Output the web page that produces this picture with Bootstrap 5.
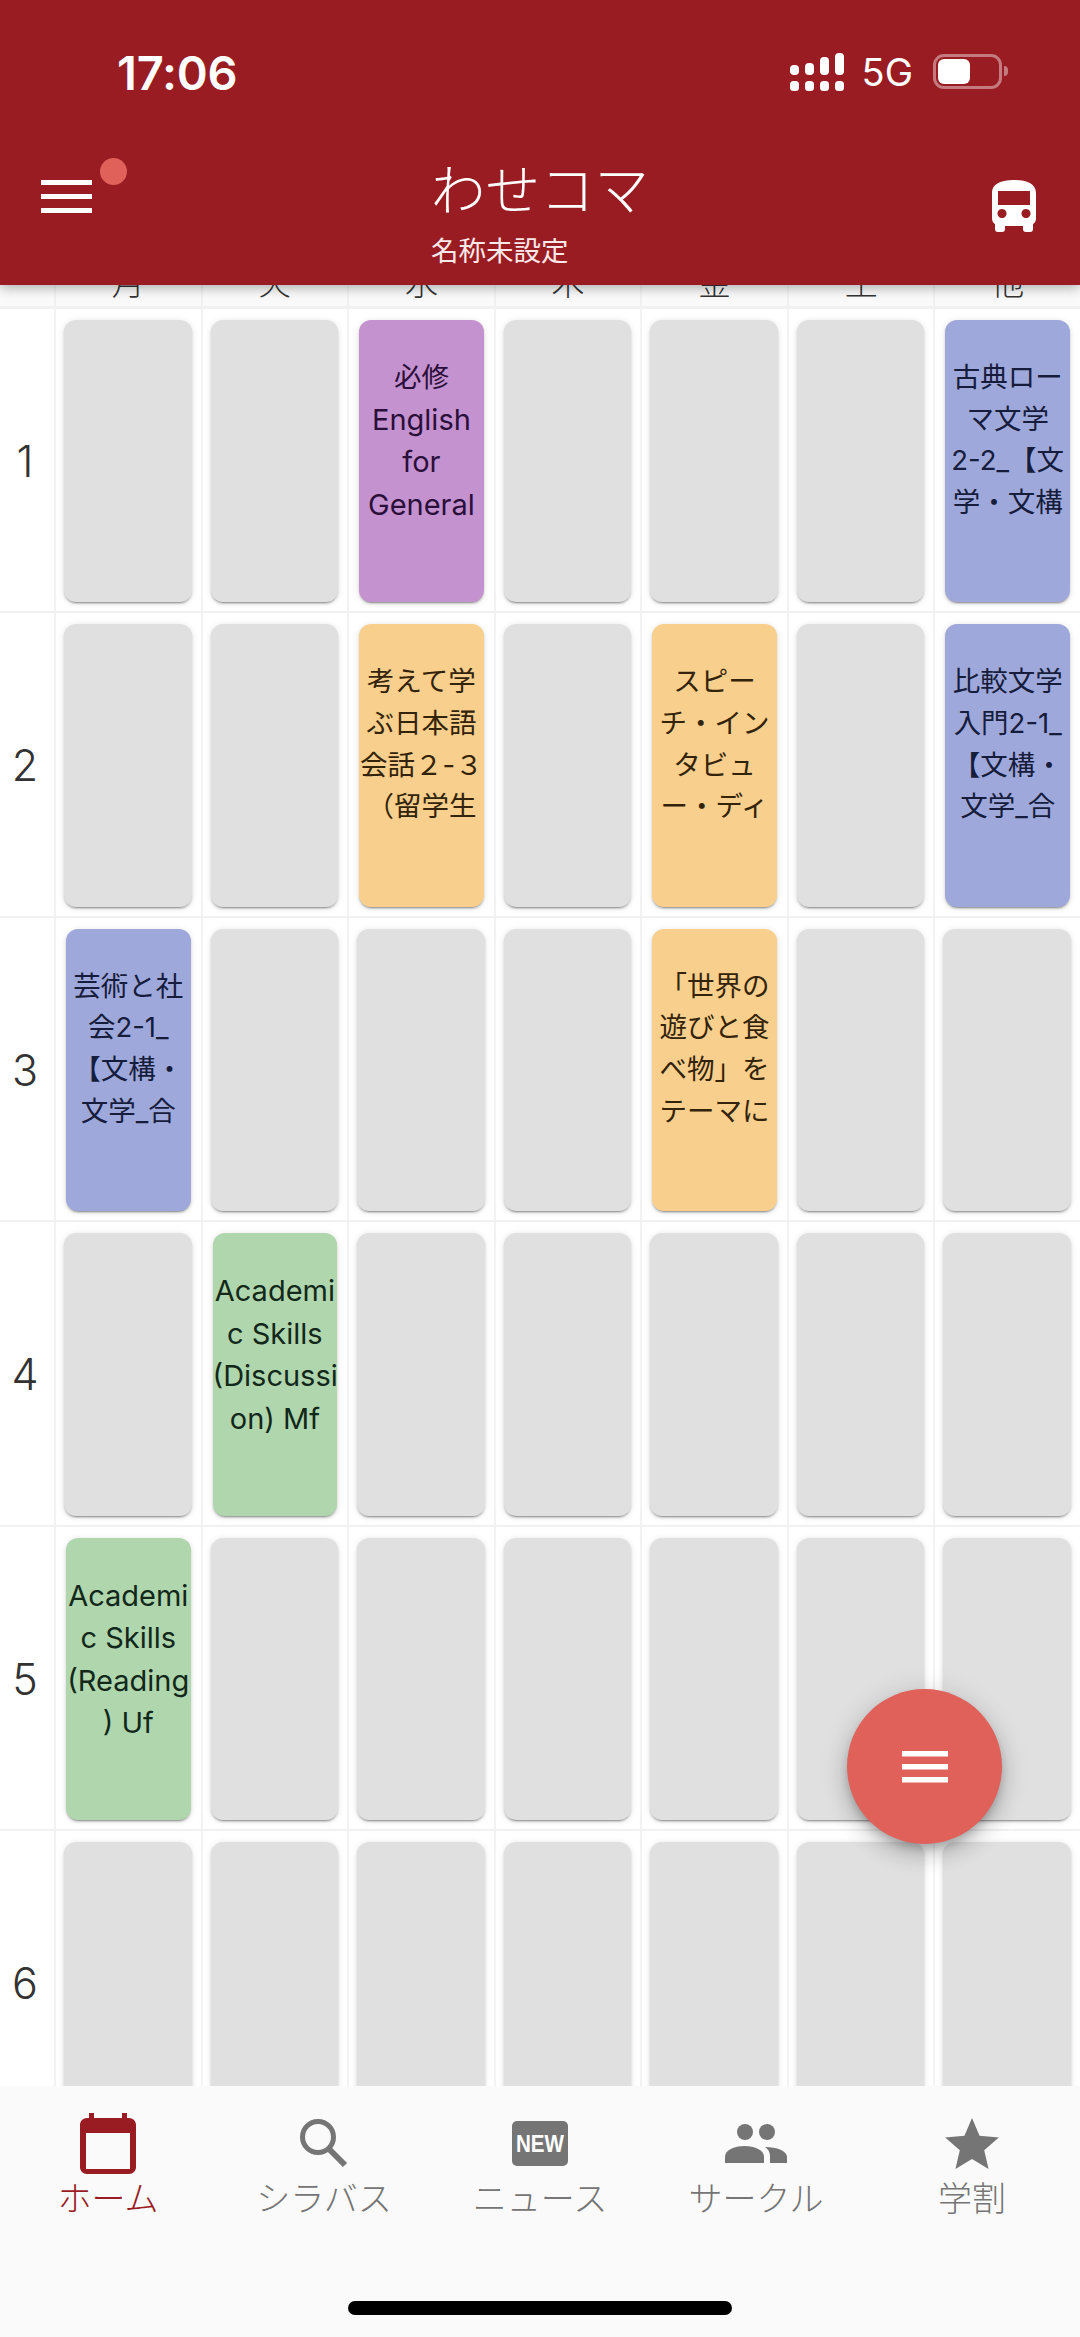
<!doctype html>
<html lang="ja">
<head>
<meta charset="utf-8">
<title>わせコマ</title>
<link href="https://cdn.jsdelivr.net/npm/bootstrap@5.3.0/dist/css/bootstrap.min.css" rel="stylesheet">
<style>
html,body{height:100%;background:#fff}
body{font-family:"Inter","Noto Sans CJK JP",sans-serif;color:#212121}
.wk-app{height:2337px}
.wk-head{background:#9a1c23;color:#fff;height:285px;box-shadow:0 2px 12px rgba(0,0,0,.35);z-index:3;flex:none}
.wk-status{height:144px;padding:0 78px 0 117px}
.wk-time{font-size:47px;font-weight:600;line-height:1;letter-spacing:-.2px}
.wk-five{font-size:38px;line-height:1;margin:0 20px 0 18px}
.wk-bat{width:69px;height:35px;border:3px solid rgba(255,255,255,.42);border-radius:11px;padding:2px;margin-top:-2px}
.wk-bat i{display:block;width:32px;height:100%;background:#fff;border-radius:6px}
.wk-tip{width:4px;height:10px;background:rgba(255,255,255,.42);border-radius:0 4px 4px 0;margin:-2px -6px 0 2px}
.wk-tool{height:141px;padding:0 44px 0 41px}
.wk-burger{width:51px;margin-top:-36px}
.wk-dot{width:27px;height:27px;border-radius:50%;background:#e0605a;top:14px;left:100px}
.wk-titles{left:431px;top:19px}
.wk-name{font-size:54.5px;line-height:54px;font-weight:300;white-space:nowrap}
.wk-sub{font-size:27.5px;line-height:32px;margin-top:18px;font-weight:400;color:#fbe9ea;white-space:nowrap}
.wk-bus{width:44px;height:52px;margin-top:-17px}
.wk-sheet{flex:1 1 0;min-height:0}
.wk-line{display:grid;grid-template-columns:54px repeat(7,minmax(0,1fr))}
.wk-days{height:24px;background:#fafafa;border-bottom:3px solid #f1f1f1}
.wk-days>div{border-left:2px solid #f1f1f1;height:100%;overflow:hidden;text-align:center;font-size:33px;line-height:33px;color:#333;font-weight:300}
.wk-days>div:first-child{border-left:0}
.wk-days>div span{display:block;margin-top:-18px}
.wk-row{height:304.4px;border-bottom:2px solid #f1f1f1}
.wk-side{font-size:43px;font-weight:300;color:#333;padding:2px 4px 0 0}
.wk-cell{min-width:0;border-left:2px solid #f3f3f3;padding:11px 9px 9px 8px;display:flex}
.wk-cell.wk-on{padding:11px 10px 9px 10px}
.wk-tile{flex:1;min-width:0;border-radius:12px;background:#e0e0e0;box-shadow:0 3px 1px -2px rgba(0,0,0,.22),0 2px 2px rgba(0,0,0,.16),0 1px 6px rgba(0,0,0,.12);padding-top:37px;text-align:center;font-size:27.5px;line-height:41.6px;white-space:nowrap;overflow:hidden}
.wk-lat{font-size:29px}
.wk-purple{background:#c592d0;color:#2a0f3a}
.wk-orange{background:#f8cf8c;color:#33230a}
.wk-blue{background:#9fa8da;color:#161c3c}
.wk-green{background:#b0d6ad;color:#12281a}
.wk-fab{width:155px;height:155px;border-radius:50%;background:#e0605a;right:78px;bottom:493px;box-shadow:0 6px 10px -2px rgba(0,0,0,.22),0 12px 22px rgba(0,0,0,.15),0 3px 30px rgba(0,0,0,.12);z-index:2}
.wk-fab:hover{background:#e0605a}
.wk-nav{background:#fafafa;height:251px;flex:none;padding-top:26px;z-index:1}
.wk-tab{flex:0 0 216px;color:#757575;font-size:34px;line-height:50px;text-align:center;font-weight:300}
.wk-tab.wk-cur{color:#9a1c23}
.wk-ico{height:62px}
.wk-bar{width:384px;height:14px;background:#000;border-radius:7px;margin:77px auto 0}
</style>
</head>
<body>
<div class="wk-app d-flex flex-column overflow-hidden position-relative">
  <header class="wk-head position-relative">
    <div class="wk-status d-flex align-items-center justify-content-between">
      <div class="wk-time">17:06</div>
      <div class="d-flex align-items-center">
        <svg width="54" height="38" viewBox="0 0 54 38" fill="#fff" aria-hidden="true"><rect x="0" y="12" width="9" height="10" rx="4"/><rect x="15" y="10" width="9" height="12" rx="4"/><rect x="30" y="4" width="9" height="18" rx="4"/><rect x="45" y="0" width="9" height="22" rx="4"/><rect x="0" y="28" width="9" height="10" rx="3.5"/><rect x="15" y="28" width="9" height="10" rx="3.5"/><rect x="30" y="28" width="9" height="10" rx="3.5"/><rect x="45" y="28" width="9" height="10" rx="3.5"/></svg>
        <span class="wk-five">5G</span>
        <div class="wk-bat"><i></i></div><div class="wk-tip"></div>
      </div>
    </div>
    <div class="wk-tool d-flex align-items-center justify-content-between position-relative">
      <svg class="wk-burger" viewBox="0 0 51 33" fill="#fff" aria-hidden="true"><rect width="51" height="5"/><rect y="14" width="51" height="5"/><rect y="28" width="51" height="5"/></svg>
      <span class="wk-dot position-absolute"></span>
      <div class="wk-titles position-absolute">
        <div class="wk-name">わせコマ</div>
        <div class="wk-sub">名称未設定</div>
      </div>
      <svg class="wk-bus" viewBox="0 0 44 52" aria-hidden="true"><path fill="#fff" fill-rule="evenodd" d="M0 38V13C0 3 11 0 22 0s22 3 22 13v25c0 3-1 5-3 6v5c0 2-1 3-3 3h-4c-2 0-3-1-3-3v-3H13v3c0 2-1 3-3 3H6c-2 0-3-1-3-3v-5c-2-1-3-3-3-6zM6 11v14h32V11zM10 29a4.500 4.500 0 1 0 .01 0zM34 29a4.500 4.500 0 1 0 .01 0z"/></svg>
    </div>
  </header>

  <main class="wk-sheet overflow-hidden">
    <div class="wk-line wk-days">
      <div></div>
      <div><span>月</span></div><div><span>火</span></div><div><span>水</span></div><div><span>木</span></div><div><span>金</span></div><div><span>土</span></div><div><span>他</span></div>
    </div>
    <div class="wk-line wk-row">
      <div class="wk-side d-flex align-items-center justify-content-center">1</div>
      <div class="wk-cell"><div class="wk-tile"></div></div>
      <div class="wk-cell"><div class="wk-tile"></div></div>
      <div class="wk-cell wk-on"><div class="wk-tile wk-purple">必修<br><span class="wk-lat">English</span><br><span class="wk-lat">for</span><br><span class="wk-lat">General</span></div></div>
      <div class="wk-cell"><div class="wk-tile"></div></div>
      <div class="wk-cell"><div class="wk-tile"></div></div>
      <div class="wk-cell"><div class="wk-tile"></div></div>
      <div class="wk-cell wk-on"><div class="wk-tile wk-blue">古典ロー<br>マ文学<br>2-2_【文<br>学・文構</div></div>
    </div>
    <div class="wk-line wk-row">
      <div class="wk-side d-flex align-items-center justify-content-center">2</div>
      <div class="wk-cell"><div class="wk-tile"></div></div>
      <div class="wk-cell"><div class="wk-tile"></div></div>
      <div class="wk-cell wk-on"><div class="wk-tile wk-orange">考えて学<br>ぶ日本語<br>会話２-３<br>（留学生</div></div>
      <div class="wk-cell"><div class="wk-tile"></div></div>
      <div class="wk-cell wk-on"><div class="wk-tile wk-orange">スピー<br>チ・イン<br>タビュ<br>ー・ディ</div></div>
      <div class="wk-cell"><div class="wk-tile"></div></div>
      <div class="wk-cell wk-on"><div class="wk-tile wk-blue">比較文学<br>入門2-1_<br>【文構・<br>文学_合</div></div>
    </div>
    <div class="wk-line wk-row">
      <div class="wk-side d-flex align-items-center justify-content-center">3</div>
      <div class="wk-cell wk-on"><div class="wk-tile wk-blue">芸術と社<br>会2-1_<br>【文構・<br>文学_合</div></div>
      <div class="wk-cell"><div class="wk-tile"></div></div>
      <div class="wk-cell"><div class="wk-tile"></div></div>
      <div class="wk-cell"><div class="wk-tile"></div></div>
      <div class="wk-cell wk-on"><div class="wk-tile wk-orange">「世界の<br>遊びと食<br>べ物」を<br>テーマに</div></div>
      <div class="wk-cell"><div class="wk-tile"></div></div>
      <div class="wk-cell"><div class="wk-tile"></div></div>
    </div>
    <div class="wk-line wk-row">
      <div class="wk-side d-flex align-items-center justify-content-center">4</div>
      <div class="wk-cell"><div class="wk-tile"></div></div>
      <div class="wk-cell wk-on"><div class="wk-tile wk-green"><span class="wk-lat">Academi</span><br><span class="wk-lat">c Skills</span><br><span class="wk-lat">(Discussi</span><br><span class="wk-lat">on) Mf</span></div></div>
      <div class="wk-cell"><div class="wk-tile"></div></div>
      <div class="wk-cell"><div class="wk-tile"></div></div>
      <div class="wk-cell"><div class="wk-tile"></div></div>
      <div class="wk-cell"><div class="wk-tile"></div></div>
      <div class="wk-cell"><div class="wk-tile"></div></div>
    </div>
    <div class="wk-line wk-row">
      <div class="wk-side d-flex align-items-center justify-content-center">5</div>
      <div class="wk-cell wk-on"><div class="wk-tile wk-green"><span class="wk-lat">Academi</span><br><span class="wk-lat">c Skills</span><br><span class="wk-lat">(Reading</span><br><span class="wk-lat">) Uf</span></div></div>
      <div class="wk-cell"><div class="wk-tile"></div></div>
      <div class="wk-cell"><div class="wk-tile"></div></div>
      <div class="wk-cell"><div class="wk-tile"></div></div>
      <div class="wk-cell"><div class="wk-tile"></div></div>
      <div class="wk-cell"><div class="wk-tile"></div></div>
      <div class="wk-cell"><div class="wk-tile"></div></div>
    </div>
    <div class="wk-line wk-row">
      <div class="wk-side d-flex align-items-center justify-content-center">6</div>
      <div class="wk-cell"><div class="wk-tile"></div></div>
      <div class="wk-cell"><div class="wk-tile"></div></div>
      <div class="wk-cell"><div class="wk-tile"></div></div>
      <div class="wk-cell"><div class="wk-tile"></div></div>
      <div class="wk-cell"><div class="wk-tile"></div></div>
      <div class="wk-cell"><div class="wk-tile"></div></div>
      <div class="wk-cell"><div class="wk-tile"></div></div>
    </div>
  </main>

  <button type="button" class="wk-fab btn p-0 border-0 position-absolute d-flex align-items-center justify-content-center" aria-label="menu">
    <svg width="46" height="32" viewBox="0 0 46 32" fill="#fff" aria-hidden="true"><rect width="46" height="5.500"/><rect y="13" width="46" height="5.500"/><rect y="26" width="46" height="5.500"/></svg>
  </button>

  <nav class="wk-nav position-relative">
    <div class="d-flex">
      <div class="wk-tab wk-cur">
        <div class="wk-ico d-flex align-items-center justify-content-center">
          <svg width="56" height="61" viewBox="0 0 56 61" aria-hidden="true"><path fill="#9a1c23" fill-rule="evenodd" d="M9 5V0h5v5h28V0h5v5h2c4 0 7 3 7 7v42c0 4-3 7-7 7H7c-4 0-7-3-7-7V12c0-4 3-7 7-7zM6 20v36h44V20z"/></svg>
        </div>
        ホーム
      </div>
      <div class="wk-tab">
        <div class="wk-ico d-flex align-items-center justify-content-center">
          <svg width="48" height="50" viewBox="0 0 48 50" aria-hidden="true"><circle cx="18" cy="19" r="15.500" fill="none" stroke="#757575" stroke-width="5"/><path d="M29 31l16 16" stroke="#757575" stroke-width="6" fill="none"/></svg>
        </div>
        シラバス
      </div>
      <div class="wk-tab">
        <div class="wk-ico d-flex align-items-center justify-content-center">
          <svg width="56" height="45" viewBox="0 0 56 45" aria-hidden="true"><rect width="56" height="45" rx="5" fill="#757575"/><text x="28" y="31" text-anchor="middle" textLength="48" lengthAdjust="spacingAndGlyphs" font-family="Liberation Sans" font-weight="700" font-size="23" fill="#fff">NEW</text></svg>
        </div>
        ニュース
      </div>
      <div class="wk-tab">
        <div class="wk-ico d-flex align-items-center justify-content-center">
          <svg width="62" height="39" viewBox="0 0 62 39" fill="#757575" aria-hidden="true"><circle cx="20" cy="8" r="8"/><circle cx="42" cy="8" r="8"/><path d="M0 39v-6c0-7 9-11 19.500-11S39 26 39 33v6z"/><path d="M45 39v-7c0-4-2-7-5-9 12 0 22 4 22 10v6z"/></svg>
        </div>
        サークル
      </div>
      <div class="wk-tab">
        <div class="wk-ico d-flex align-items-center justify-content-center">
          <svg width="54" height="51" viewBox="2 2 20 19" fill="#757575" aria-hidden="true"><path d="M12 17.270L18.180 21l-1.640-7.030L22 9.240l-7.190-.61L12 2 9.190 8.630 2 9.240l5.460 4.730L5.820 21z"/></svg>
        </div>
        学割
      </div>
    </div>
    <div class="wk-bar"></div>
  </nav>
</div>
<script src="https://cdn.jsdelivr.net/npm/bootstrap@5.3.0/dist/js/bootstrap.bundle.min.js"></script>
</body>
</html>
